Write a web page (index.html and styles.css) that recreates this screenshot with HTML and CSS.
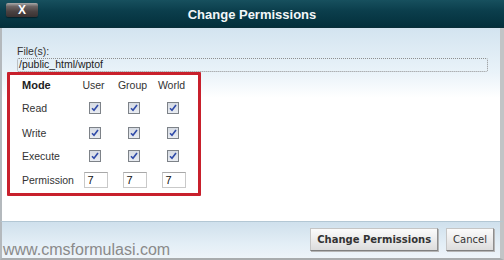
FILE: index.html
```html
<!DOCTYPE html>
<html>
<head>
<meta charset="utf-8">
<link rel="stylesheet" href="styles.css">
</head>
<body>
<div class="dialog">
  <div class="titlebar">
    <div class="close">X</div>
    <div class="title">Change Permissions</div>
  </div>
  <div class="content">
    <div class="label">File(s):</div>
    <div class="files">/public_html/wptof</div>
    <div class="perm-box">
      <div class="grid">
        <div class="hd mode">Mode</div><div class="hd">User</div><div class="hd">Group</div><div class="hd">World</div>
        <div class="rl">Read</div>
        <div class="cell"><span class="cb"><svg viewBox="0 0 8 8"><path d="M1 4.2 L3 6.3 L7 1"/></svg></span></div>
        <div class="cell"><span class="cb"><svg viewBox="0 0 8 8"><path d="M1 4.2 L3 6.3 L7 1"/></svg></span></div>
        <div class="cell"><span class="cb"><svg viewBox="0 0 8 8"><path d="M1 4.2 L3 6.3 L7 1"/></svg></span></div>
        <div class="rl">Write</div>
        <div class="cell"><span class="cb"><svg viewBox="0 0 8 8"><path d="M1 4.2 L3 6.3 L7 1"/></svg></span></div>
        <div class="cell"><span class="cb"><svg viewBox="0 0 8 8"><path d="M1 4.2 L3 6.3 L7 1"/></svg></span></div>
        <div class="cell"><span class="cb"><svg viewBox="0 0 8 8"><path d="M1 4.2 L3 6.3 L7 1"/></svg></span></div>
        <div class="rl">Execute</div>
        <div class="cell"><span class="cb"><svg viewBox="0 0 8 8"><path d="M1 4.2 L3 6.3 L7 1"/></svg></span></div>
        <div class="cell"><span class="cb"><svg viewBox="0 0 8 8"><path d="M1 4.2 L3 6.3 L7 1"/></svg></span></div>
        <div class="cell"><span class="cb"><svg viewBox="0 0 8 8"><path d="M1 4.2 L3 6.3 L7 1"/></svg></span></div>
        <div class="rl">Permission</div>
        <div class="cell"><span class="num">7</span></div>
        <div class="cell"><span class="num">7</span></div>
        <div class="cell"><span class="num">7</span></div>
      </div>
    </div>
  </div>
  <div class="footer">
    <div class="btn primary">Change Permissions</div>
    <div class="btn">Cancel</div>
  </div>
  <div class="watermark">www.cmsformulasi.com</div>
</div>
</body>
</html>
```

FILE: styles.css
```css
html, body {
  margin: 0;
  padding: 0;
  background: #ffffff;
}
.dialog {
  position: relative;
  width: 504px;
  height: 260px;
  display: flex;
  flex-direction: column;
  font-family: "Liberation Sans", Arial, sans-serif;
  overflow: hidden;
}
.titlebar {
  height: 27px;
  flex: none;
  background: linear-gradient(#17505e, #0b3e4c 40%, #03303c);
  display: flex;
  align-items: center;
  position: relative;
  border-bottom: 1px solid #0a2f39;
}
.close {
  position: absolute;
  left: 6px;
  top: 3px;
  width: 32px;
  height: 14px;
  border-radius: 2px;
  background: linear-gradient(#a9a9a9, #6b6464 25%, #4b4242 60%, #3a3232);
  color: #fff;
  font: bold 12px/14px "Liberation Sans", Arial, sans-serif;
  text-align: center;
  box-shadow: 0 1px 1px rgba(0,0,0,0.4);
}
.title {
  flex: 1;
  text-align: center;
  color: #f2f7f9;
  font: bold 13px "Liberation Sans", Arial, sans-serif;
  padding-top: 2px;
}
.content {
  flex: 1;
  background: linear-gradient(#d3e4f0, #eaf3f9 45px, #ffffff 70px);
  border-left: 2px solid #b4b9bd;
  border-right: 4px solid #c2c4c6;
  padding: 17px 14px 0 5px;
  color: #333;
}
.label {
  font-size: 10.5px;
  line-height: 13px;
  margin-left: 10px;
  color: #333;
}
.files {
  margin-left: 10px;
  height: 12px;
  border: 1px dotted #8f8f8f;
  border-radius: 2px;
  font-size: 10.5px;
  line-height: 10px;
  padding: 0 0 0 1px;
  color: #222;
  width: 468px;
}
.perm-box {
  width: 188px;
  height: 118px;
  border: 3px solid #c8202c;
  border-radius: 1px;
  background: #fff;
}
.grid {
  display: grid;
  grid-template-columns: 52px 39px 39px 39px;
  grid-template-rows: 20px 26px 23px 24px 24px;
  padding: 0 0 0 12px;
  font-size: 10.5px;
  color: #333;
  align-items: center;
}
.hd {
  text-align: center;
  font-size: 10.5px;
}
.hd.mode {
  text-align: left;
  font-weight: bold;
  font-size: 11px;
  color: #222;
}
.rl {
  text-align: left;
  white-space: nowrap;
}
.cell {
  display: flex;
  justify-content: center;
  align-items: center;
}
.cb {
  width: 10px;
  height: 10px;
  border: 1px solid #7d8288;
  background: linear-gradient(#d6dbe3, #e9ecf1);
  display: flex;
  align-items: center;
  justify-content: center;
  margin-left: 2px;
}
.cb svg {
  width: 8px;
  height: 8px;
}
.cb path {
  fill: none;
  stroke: #2f4aa8;
  stroke-width: 1.6;
}
.num {
  width: 19px;
  height: 14px;
  border: 1px solid #c9c9c9;
  border-top-color: #a8a8a8;
  background: #fff;
  font-size: 11px;
  line-height: 14px;
  padding-left: 3px;
  box-sizing: content-box;
  margin-left: 4px;
  color: #111;
}
.footer {
  flex: none;
  border-top: 1px solid #b3c7d4;
  border-left: 2px solid #b4b9bd;
  border-right: 4px solid #c2c4c6;
  border-bottom: 2px solid #a9acae;
  background: linear-gradient(#cfe0ec, #e3eef6 60%, #eef4f9);
  display: flex;
  justify-content: flex-end;
  align-items: flex-start;
  gap: 8px;
  padding: 6px 6px 0 0;
  box-sizing: border-box;
  height: 39px;
}
.btn {
  height: 21px;
  padding: 0 6px;
  border: 1px solid #c5c5c5;
  border-right-color: #8e8e8e;
  border-bottom-color: #7f7f7f;
  background: linear-gradient(#fbfbfb, #ececec 50%, #dcdcdc);
  font: 10px/21px "DejaVu Sans", Verdana, sans-serif;
  color: #333;
  box-shadow: 1px 1px 0 #b5b5b5;
  white-space: nowrap;
}
.btn.primary {
  font-weight: bold;
}
.watermark {
  position: absolute;
  left: 3px;
  top: 241px;
  font: 16px "Liberation Sans", Arial, sans-serif;
  color: #8a8a8a;
}
```
